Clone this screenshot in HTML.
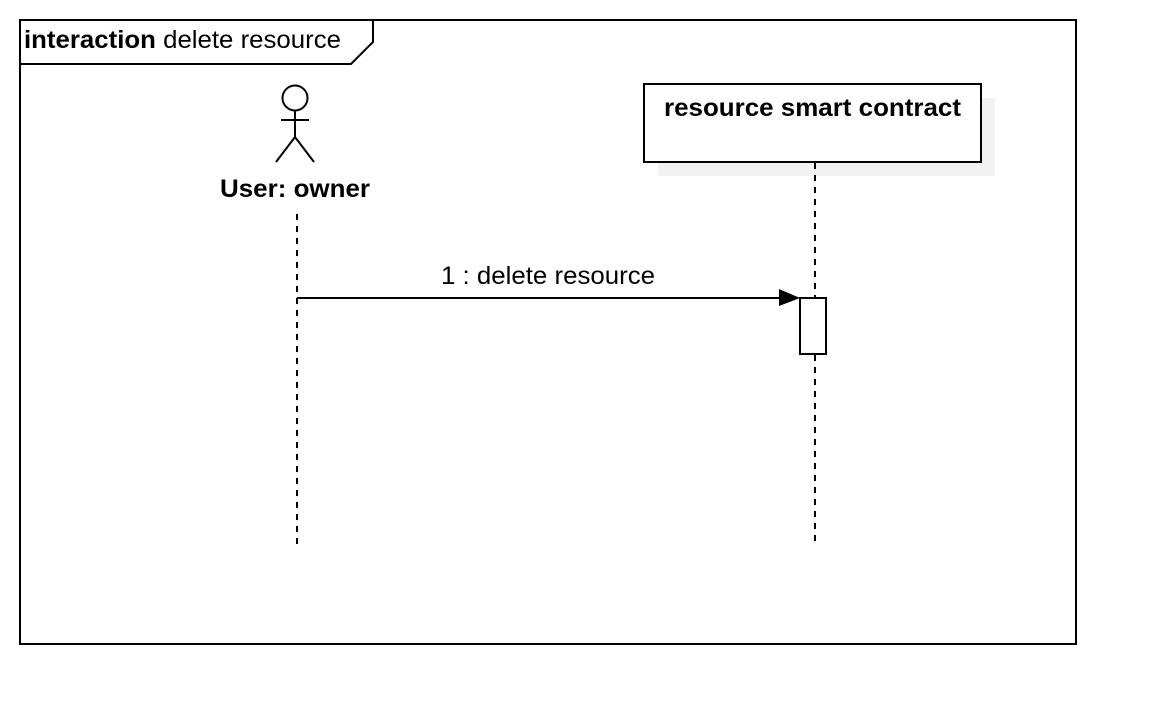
<!DOCTYPE html>
<html><head><style>body{margin:0;background:#fff}svg{display:block}</style></head>
<body>
<svg width="1156" height="724" xmlns="http://www.w3.org/2000/svg" font-family="Liberation Sans, sans-serif">
<rect x="20" y="20" width="1056" height="624" fill="none" stroke="#000" stroke-width="2"/>
<path d="M20 64 H351 L373 42 V20" fill="none" stroke="#000" stroke-width="2"/>
<text x="24" y="48" font-size="25" textLength="317" lengthAdjust="spacingAndGlyphs"><tspan font-weight="bold">interaction</tspan> delete resource</text>
<circle cx="295" cy="98" r="12.5" fill="none" stroke="#000" stroke-width="2"/>
<path d="M295 111 V137 M281 120 H309 M276 162 L295 137 L314 162" fill="none" stroke="#000" stroke-width="2"/>
<text x="220" y="197" font-size="25" font-weight="bold" textLength="150" lengthAdjust="spacingAndGlyphs">User: owner</text>
<line x1="297" y1="214" x2="297" y2="545" stroke="#000" stroke-width="2" stroke-dasharray="6,6"/>
<rect x="658" y="98" width="337" height="78" fill="#f2f2f2"/>
<rect x="644" y="84" width="337" height="78" fill="#fff" stroke="#000" stroke-width="2"/>
<text x="664" y="116" font-size="25" font-weight="bold" textLength="297" lengthAdjust="spacingAndGlyphs">resource smart contract</text>
<line x1="815" y1="163" x2="815" y2="545" stroke="#000" stroke-width="2" stroke-dasharray="6,6"/>
<line x1="297" y1="298" x2="790" y2="298" stroke="#000" stroke-width="2"/>
<path d="M779 289 L800 298 L779 306 Z" fill="#000"/>
<rect x="800" y="298" width="26" height="56" fill="#fff" stroke="#000" stroke-width="2"/>
<text x="441" y="284" font-size="25" textLength="214" lengthAdjust="spacingAndGlyphs">1 : delete resource</text>
</svg>
</body></html>
